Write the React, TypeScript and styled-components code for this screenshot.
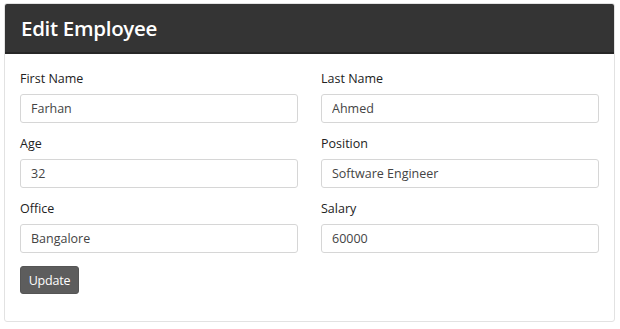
import React from "react";
import styled, { createGlobalStyle } from "styled-components";

const Global = createGlobalStyle`
  html, body { margin: 0; padding: 0; background: #ffffff; }
  body { font-family: "Open Sans", "Noto Sans", Arial, sans-serif; }
  * { box-sizing: border-box; }
`;

const Page = styled.div`
  padding: 3px 5px 0 4px;
`;

const Card = styled.div`
  width: 611px;
  border: 1px solid #e2e2e2;
  border-radius: 3px;
  background: #fff;
  overflow: hidden;
`;

const Header = styled.div`
  height: 50px;
  background: #343434;
  border-bottom: 2px solid #262626;
  display: flex;
  align-items: center;
  padding: 0 16px;
`;

const Title = styled.h1`
  margin: 0;
  color: #ffffff;
  font-size: 20.5px;
  font-weight: 600;
  letter-spacing: -0.3px;
`;

const Body = styled.div`
  padding: 15px 15px 27px 15px;
`;

const Grid = styled.div`
  display: grid;
  grid-template-columns: 278px 278px;
  column-gap: 23px;
  row-gap: 11px;
`;

const Field = styled.div`
  display: flex;
  flex-direction: column;
`;

const Label = styled.label`
  font-size: 12.5px;
  line-height: 20px;
  color: #222;
  margin-bottom: 5px;
`;

const Input = styled.input`
  height: 29px;
  border: 1px solid #d6d6d6;
  border-radius: 3px;
  padding: 0 10px;
  font-family: inherit;
  font-size: 12.5px;
  color: #444;
  background: #fff;
  outline: none;
`;

const Button = styled.button`
  margin-top: 13px;
  height: 28px;
  width: 59px;
  padding: 0;
  background: #5d5d5d;
  color: #fff;
  border: 1px solid #555;
  border-radius: 3px;
  font-family: inherit;
  font-size: 12.5px;
  letter-spacing: -0.2px;
`;

const fields = [
  ["First Name", "Farhan"],
  ["Last Name", "Ahmed"],
  ["Age", "32"],
  ["Position", "Software Engineer"],
  ["Office", "Bangalore"],
  ["Salary", "60000"],
];

export default function App() {
  return (
    <Page>
      <Global />
      <Card>
        <Header>
          <Title>Edit Employee</Title>
        </Header>
        <Body>
          <Grid>
            {fields.map(([l, v]) => (
              <Field key={l}>
                <Label>{l}</Label>
                <Input defaultValue={v} />
              </Field>
            ))}
          </Grid>
          <Button>Update</Button>
        </Body>
      </Card>
    </Page>
  );
}
